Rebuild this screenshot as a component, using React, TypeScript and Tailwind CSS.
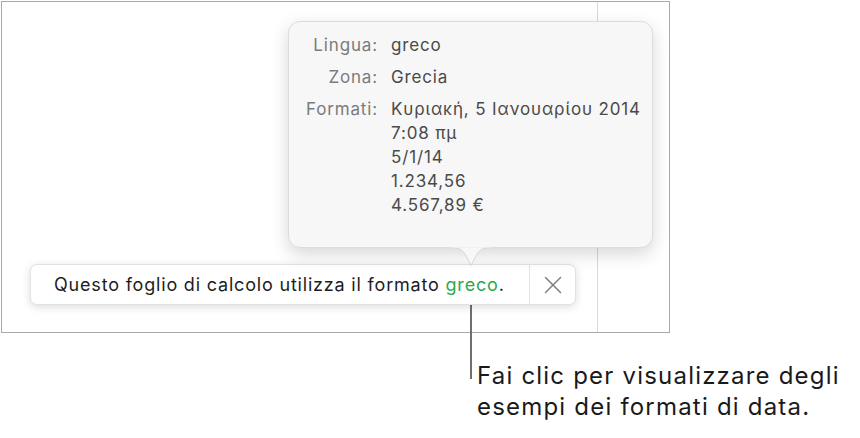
import { X } from "lucide-react";

const rows = [
  { label: "Lingua:", values: ["greco"] },
  { label: "Zona:", values: ["Grecia"] },
  {
    label: "Formati:",
    values: [
      "Κυριακή, 5 Ιανουαρίου 2014",
      "7:08 πμ",
      "5/1/14",
      "1.234,56",
      "4.567,89 €",
    ],
  },
];

function LocalePopover() {
  return (
    <div className="absolute left-[286px] top-[19px] z-20 w-[365px]">
      <div className="h-[227px] rounded-[12px] border border-[#dcdcdc] bg-[#f7f7f7] pt-[11px] shadow-[0_6px_18px_rgba(0,0,0,0.16)]">
        <div className="flex flex-col gap-[8px]">
          {rows.map((r) => (
            <div key={r.label} className="flex text-[17px] leading-[24px] tracking-[0.05em]">
              <div className="w-[89px] shrink-0 text-right text-[#7b7b7b]">{r.label}</div>
              <div className="pl-[13px] text-[#4a4a4a]">
                {r.values.map((v) => (
                  <div key={v}>{v}</div>
                ))}
              </div>
            </div>
          ))}
        </div>
      </div>
      {/* pointer */}
      <svg
        className="absolute left-[162px] top-[225px]"
        width="42"
        height="22"
        viewBox="0 0 42 22"
      >
        <path
          d="M0 1.5 C8 1.5 11 2.5 15 8 L21 19.5 L27 8 C31 2.5 34 1.5 42 1.5"
          fill="#f7f7f7"
          stroke="#d6d6d6"
          strokeWidth="1"
        />
        <rect x="0" y="0" width="42" height="1.5" fill="#f7f7f7" />
      </svg>
    </div>
  );
}

function NoticeBar() {
  return (
    <div className="absolute left-[28px] top-[262px] z-10 flex h-[41px] w-[546px] items-stretch rounded-[7px] border border-[#e2e2e2] bg-white shadow-[0_2px_8px_rgba(0,0,0,0.14)]">
      <div className="flex flex-1 items-center pl-[23px] text-[18px] tracking-[0.045em] text-[#1d1d1d]">
        Questo foglio di calcolo utilizza il formato&nbsp;
        <span className="text-[#2ea84f]">greco</span>.
      </div>
      <div className="flex w-[46px] items-center justify-center border-l border-[#e4e4e4]">
        <X size={30} strokeWidth={1.2} color="#7d7d7d" />
      </div>
    </div>
  );
}

export default function App() {
  return (
    <div
      className="h-[438px] w-[860px] bg-white pl-px pt-px"
      style={{ fontFamily: "Inter, 'Noto Sans', sans-serif" }}
    >
      <div className="relative flex h-[332px] w-[669px] border border-[#a9a9a9]">
        <div className="w-[596px] border-r border-[#d9d9d9]" />
        <div className="flex-1" />
        <LocalePopover />
        <NoticeBar />
        {/* callout leader */}
        <div className="absolute left-[468px] top-[303px] h-[74px] w-[2px] bg-[#6f6f6f]" />
      </div>
      <div className="ml-[476px] mt-[27px] text-[24px] leading-[31px] tracking-[0.05em] text-[#1a1a1a]">
        <div>Fai clic per visualizzare degli</div>
        <div>esempi dei formati di data.</div>
      </div>
    </div>
  );
}
